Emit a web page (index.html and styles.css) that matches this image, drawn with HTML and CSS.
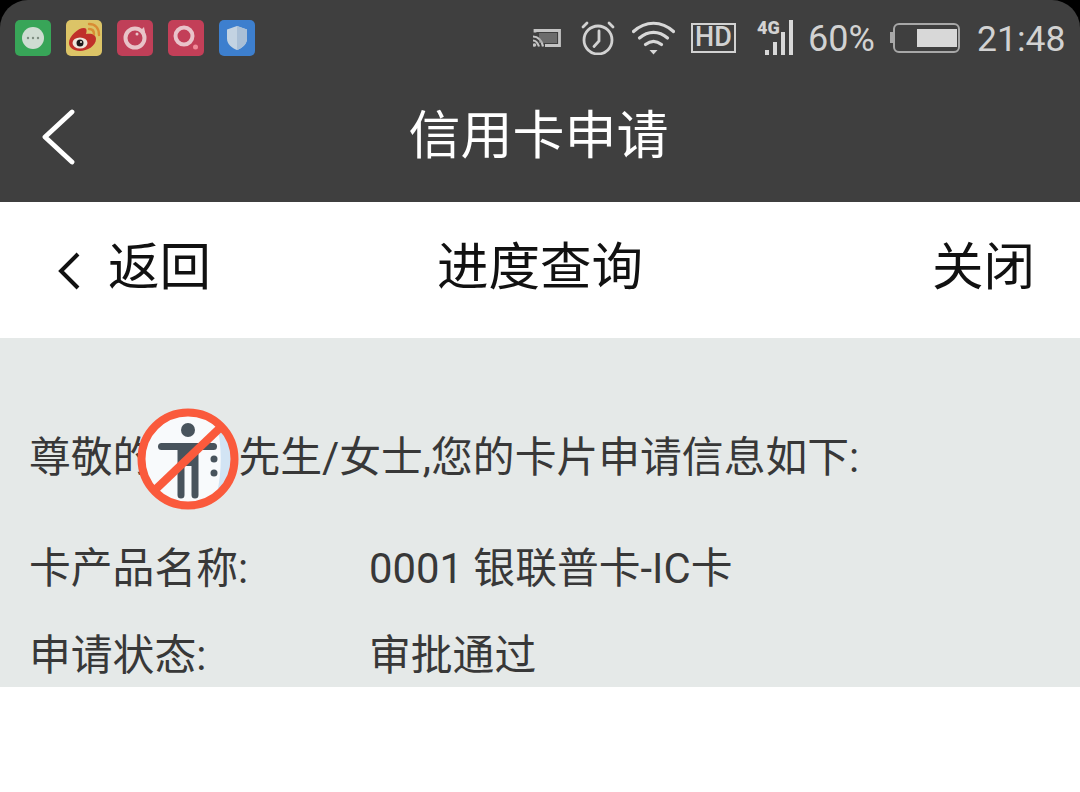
FILE: index.html
```html
<!DOCTYPE html>
<html lang="zh-CN">
<head>
    <meta charset="UTF-8">
    <meta name="viewport" content="width=device-width, initial-scale=1.0">
    <title>信用卡申请</title>
    <link rel="stylesheet" href="styles.css">
</head>
<body>
    <div class="top">
        <div class="status">
            <div class="apps">
                <svg class="app" viewBox="0 0 36 36">
                    <rect width="36" height="36" rx="5" fill="#38a558"/>
                    <circle cx="18" cy="18" r="11" fill="#cfdcd2"/>
                    <circle cx="13" cy="18" r="1.200" fill="#7d8c80"/>
                    <circle cx="18" cy="18" r="1.200" fill="#7d8c80"/>
                    <circle cx="23" cy="18" r="1.200" fill="#7d8c80"/>
                </svg>
                <svg class="app" viewBox="0 0 36 36">
                    <rect width="36" height="36" rx="5" fill="#dcc467"/>
                    <path d="M3 23c0-7 9-15 15-15 3 0 3 3 2 6 5-1 10 0 10 5 0 7-9 12-16 12-7 0-11-4-11-8z" fill="#c0302a"/>
                    <ellipse cx="14" cy="23" rx="7.500" ry="5.500" fill="#efe7dc"/>
                    <circle cx="14" cy="23" r="3.500" fill="#1d1a1a"/>
                    <circle cx="15" cy="22" r="1" fill="#efe7dc"/>
                    <path d="M23 4c6 0 10 4 10 11M23 9c3 0 5 2 5 5" fill="none" stroke="#d98c34" stroke-width="2.400" stroke-linecap="round"/>
                </svg>
                <svg class="app" viewBox="0 0 36 36">
                    <rect width="36" height="36" rx="5" fill="#c03f58"/>
                    <circle cx="18" cy="18" r="9.500" fill="none" stroke="#e8c3c8" stroke-width="4"/>
                    <path d="M24 10l3-3 1 5-2 2z" fill="#e8c3c8"/>
                    <circle cx="20" cy="14" r="1.500" fill="#e8c3c8"/>
                </svg>
                <svg class="app" viewBox="0 0 36 36">
                    <rect width="36" height="36" rx="5" fill="#c33f58"/>
                    <circle cx="16" cy="16" r="8.500" fill="none" stroke="#e9c3ca" stroke-width="4"/>
                    <circle cx="27.500" cy="27" r="2.500" fill="#f08a98"/>
                </svg>
                <svg class="app" viewBox="0 0 36 36">
                    <rect width="36" height="36" rx="5" fill="#3d7fce"/>
                    <path d="M18 6l10 3.500v9c0 6-5 9.500-10 11.500-5-2-10-5.500-10-11.500v-9z" fill="#c3d3e2"/>
                    <path d="M18 6l10 3.500v9c0 6-5 9.500-10 11.500z" fill="#a9bfd6"/>
                </svg>
            </div>
            <div class="indicators">
                <svg class="ic-cast" viewBox="0 0 28 18" fill="none" stroke="#c4c4c4">
                    <path d="M2 3.500V1.500h24.500v15H12" stroke-width="2.800"/>
                    <path d="M0 7.500c5 0 9 4 10 10M0 11.500c3 0 5 3 6 6" stroke-width="2.200"/>
                    <circle cx="1.500" cy="16" r="1.800" fill="#c4c4c4" stroke="none"/>
                    <rect x="6" y="4" width="18" height="10" fill="#9a9a9a" stroke="none" opacity="0.500"/>
                </svg>
                <svg class="ic-alarm" viewBox="0 0 34 34" fill="none" stroke="#d2d2d2" stroke-width="2.800" stroke-linecap="round">
                    <circle cx="17" cy="19" r="14"/>
                    <path d="M18 10v10l-5 5.500"/>
                    <path d="M2 6l4-4M32 6l-4-4"/>
                </svg>
                <svg class="ic-wifi" viewBox="0 0 43 34" fill="none" stroke="#d8d8d8" stroke-width="3.200" stroke-linecap="round">
                    <path d="M1.500 10.500c12-11 28-11 40 0"/>
                    <path d="M7.500 17c8.500-7.500 19.500-7.500 28 0"/>
                    <path d="M13.500 23.500c5-4 11-4 16 0"/>
                    <path d="M17.500 29h8l-4 4.500z" fill="#d8d8d8" stroke="none"/>
                </svg>
                <span class="hd">HD</span>
                <div class="signal">
                    <span class="net">4G</span>
                    <svg class="bars" viewBox="0 0 28 35" fill="#d8d8d8">
                        <rect x="0" y="30" width="4" height="5"/>
                        <rect x="8" y="22" width="4" height="13"/>
                        <rect x="16" y="12" width="4" height="23"/>
                        <rect x="24" y="0" width="4" height="35"/>
                    </svg>
                </div>
                <span class="pct">60%</span>
                <div class="battery"><div class="battery-level"></div></div>
                <span class="clock">21:48</span>
            </div>
        </div>
        <div class="titlebar">
            <svg class="title-back" viewBox="0 0 34 56" fill="none" stroke="#fff" stroke-width="4.800" stroke-linecap="round" stroke-linejoin="round">
                <path d="M30 3L3 28l27 25"/>
            </svg>
            <h1>信用卡申请</h1>
        </div>
    </div>

    <div class="nav">
        <div class="nav-back">
            <svg viewBox="0 0 22 38" fill="none" stroke="#111" stroke-width="4">
                <path d="M20 2L3 19l17 17"/>
            </svg>
            <span>返回</span>
        </div>
        <div class="nav-title">进度查询</div>
        <div class="nav-close">关闭</div>
    </div>

    <div class="content">
        <p class="greeting">尊敬的<span class="name-gap"></span>先生/女士,您的卡片申请信息如下:</p>
        <div class="row row-product">
            <div class="label">卡产品名称:</div>
            <div class="value">0001 银联普卡-IC卡</div>
        </div>
        <div class="row">
            <div class="label">申请状态:</div>
            <div class="value">审批通过</div>
        </div>

        <svg class="no-touch" viewBox="0 0 102 102">
            <circle cx="51" cy="51" r="46" fill="#f8fafc"/>
            <path d="M80 17a46 46 0 0 1 0 68c5-22 5-46 0-68z" fill="#d2e4f4"/>
            <circle cx="51" cy="22" r="7" fill="#48535c"/>
            <rect x="21" y="35" width="59" height="7" rx="3.500" fill="#48535c"/>
            <path d="M40.500 38h21v49a3.500 3.500 0 0 1-7 0V58h-7v29a3.500 3.500 0 0 1-7 0z" fill="#48535c"/>
            <circle cx="77" cy="51" r="3.500" fill="#48535c"/>
            <circle cx="77" cy="65" r="3.500" fill="#48535c"/>
            <circle cx="51" cy="51" r="46.500" fill="none" stroke="#fa5a3c" stroke-width="8"/>
            <path d="M19 81L85 18" stroke="#fa5a3c" stroke-width="8"/>
        </svg>
    </div>
</body>
</html>
```

FILE: styles.css
```css
* {
    box-sizing: border-box;
}
body {
    margin: 0;
    height: 792px;
    overflow: hidden;
    background-color: #fff;
    font-family: Roboto, "Noto Sans CJK SC", sans-serif;
}
.top {
    background-color: #000;
}
.status {
    height: 75px;
    display: flex;
    justify-content: space-between;
    align-items: center;
    padding: 0 16px 0 15px;
    background-color: #3f3f3f;
    border-radius: 28px 28px 0 0;
}
.apps {
    display: flex;
    gap: 15px;
}
.app {
    display: block;
    width: 36px;
    height: 36px;
}
.indicators {
    display: flex;
    align-items: center;
    color: #d2d2d2;
}
.ic-cast {
    width: 28px;
    height: 18px;
    margin-right: 20px;
}
.ic-alarm {
    width: 34px;
    height: 34px;
    margin-right: 17px;
}
.ic-wifi {
    width: 43px;
    height: 34px;
    margin-right: 16px;
}
.hd {
    width: 45px;
    height: 30px;
    margin-right: 22px;
    border: 2.500px solid #d2d2d2;
    font-size: 27px;
    line-height: 25px;
    font-weight: 500;
    text-align: center;
}
.signal {
    position: relative;
    width: 35px;
    height: 35px;
    margin-right: 15px;
}
.net {
    position: absolute;
    left: -1px;
    top: 0;
    font-size: 18px;
    line-height: 16px;
    font-weight: 900;
}
.bars {
    position: absolute;
    right: 0;
    top: 0;
    width: 28px;
    height: 35px;
}
.pct {
    width: 65px;
    margin-right: 20px;
    padding-top: 2px;
    font-size: 36px;
    white-space: nowrap;
}
.battery {
    position: relative;
    width: 67px;
    height: 30px;
    margin-right: 17px;
    padding: 4px 1px;
    display: flex;
    justify-content: flex-end;
    border: 2px solid #a8a8a8;
    border-radius: 6px;
}
.battery::before {
    content: "";
    position: absolute;
    left: -5px;
    top: 7px;
    width: 3px;
    height: 11px;
    background-color: #a8a8a8;
}
.battery-level {
    width: 40px;
    background-color: #d8d8d8;
}
.clock {
    width: 87px;
    padding-top: 2px;
    font-size: 35.500px;
    white-space: nowrap;
}
.titlebar {
    position: relative;
    height: 127px;
    display: flex;
    justify-content: center;
    align-items: center;
    padding: 0 3px 15px 0;
    background-color: #3f3f3f;
}
.titlebar h1 {
    margin: 0;
    color: #fff;
    font-size: 52px;
    font-weight: 400;
}
.title-back {
    position: absolute;
    left: 42px;
    top: 34px;
    width: 34px;
    height: 56px;
}
.nav {
    height: 136px;
    display: grid;
    grid-template-columns: 1fr auto 1fr;
    align-items: center;
    padding: 0 45px 15px;
    color: #111;
    font-size: 51.500px;
}
.nav-back {
    display: flex;
    align-items: center;
    gap: 28px;
    margin-left: 13px;
}
.nav-back svg {
    width: 22px;
    height: 38px;
    margin-top: 17px;
}
.nav-close {
    text-align: right;
}
.content {
    position: relative;
    height: 349px;
    padding: 85px 29px 0;
    background-color: #e5e9e8;
    color: #383838;
    font-size: 41.800px;
}
.greeting {
    margin: 0 0 43px;
    line-height: 70px;
    white-space: nowrap;
}
.name-gap {
    display: inline-block;
    width: 84px;
}
.row {
    display: grid;
    grid-template-columns: 340px 1fr;
    line-height: 66px;
}
.row-product {
    margin-bottom: 21px;
}
.no-touch {
    position: absolute;
    left: 137px;
    top: 70px;
    width: 102px;
    height: 102px;
}
```
